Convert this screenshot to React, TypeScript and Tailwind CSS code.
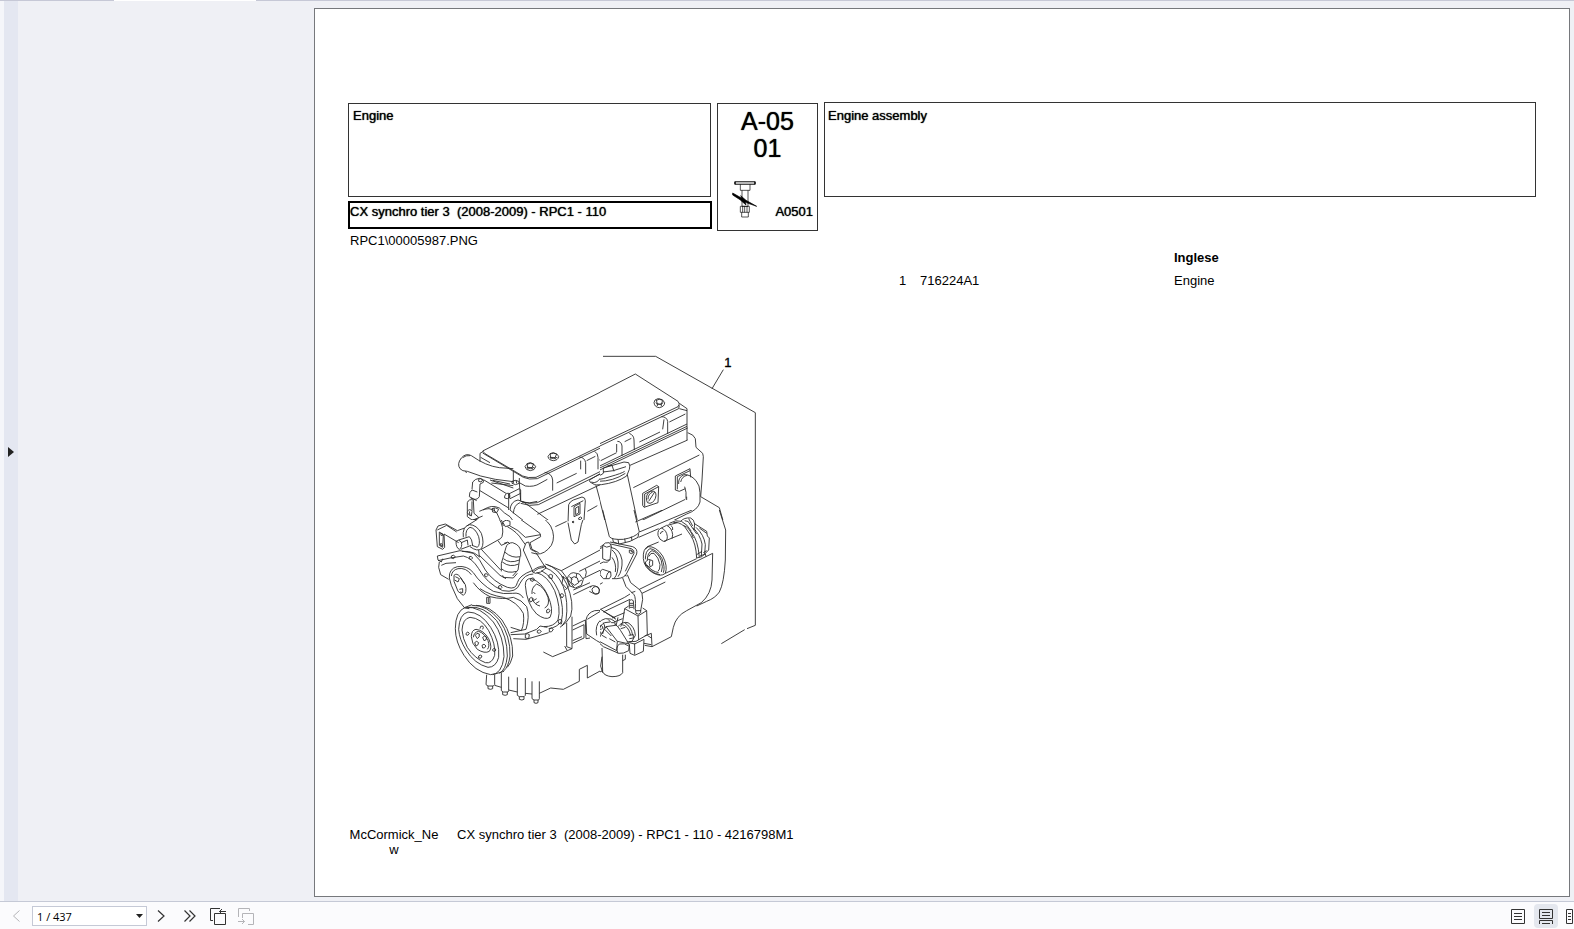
import React from 'react';

const TITLE = 'CX synchro tier 3\u00a0 (2008-2009) - RPC1 - 110';

// Rocker cover, thermostat housing and water pump
const coverLeft = [
  'M158 333 L540 142',
  'M158 333 L165 341 L278 408 Q292 415 318 412 L540 304',
  'M158 339 L280 412 Q296 420 322 416 L540 310',
  'M150 340 L150 365 M150 340 L160 334 M152 352 L180 368',
  'M268 414 L268 428 L286 438 Q312 442 330 430 L352 418',
  'M268 428 L272 484 Q298 494 322 488 L540 380',
  'M272 490 Q300 500 325 494 L540 388 M276 486 Q300 492 322 484',
  'M344 397 Q366 400 368 420 L368 452',
  'M448 351 Q464 352 467 368 L467 402 M452 362 L452 388',
  'M494 334 Q504 340 504 352 L504 388',
  'M380 429 L440 400 M470 362 L496 349 M508 360 L540 343',
  'M90 386 Q80 372 94 354 Q108 338 124 347 Q168 378 208 383 L250 386',
  'M90 386 Q96 394 112 394 Q150 410 196 418 L250 425 M106 394 L110 399',
  'M120 347 Q108 345 98 353 M250 394 L250 430',
  'M246 424 Q256 418 266 424 L268 430 Q256 438 246 430 Z M258 420 L260 430',
  'M126 448 L128 426 Q136 416 148 415 L160 419 L160 427 L150 432 L148 470 Q140 484 122 474',
  'M118 470 Q117 456 126 450 L142 456 M118 470 L140 482',
  'M146 418 Q152 412 158 420 Q154 430 146 424 Z',
  'M162 420 L228 460 M150 452 L236 504 M180 420 L250 444 M184 429 L250 437 M188 421 L240 432',
  'M224 468 Q228 456 238 460 L240 470 Q232 480 224 474 Z',
  'M236 462 L268 446 L272 450 L272 480 M236 462 L236 510 M236 462 L240 476 L272 460',
  'M240 510 Q242 484 264 480 Q280 482 300 500 L362 546 L374 570',
  'M250 520 Q252 494 270 488 M240 510 L252 520 L330 580',
  'M112 488 Q116 476 130 480 L132 520 L146 532 L142 538 L126 540 L112 530 Z M126 484 L126 512',
  'M112 514 Q120 504 126 514 L124 528 Q116 526 112 518 M118 514 L120 526',
  'M110 548 L158 528 M148 514 Q180 496 200 518 Q214 540 216 570',
  'M160 510 Q184 492 208 504 Q222 520 240 530 L262 560',
  'M186 506 Q196 500 206 508 L200 518 L188 516 Z M192 504 L194 514',
  'M222 546 Q232 538 242 548 L238 556 L224 556 Z M230 542 L230 554',
  'M322 523 L540 420',
  'M416 494 Q420 484 430 480 L456 471 Q466 472 466 482 L462 540 L454 570 M416 494 L414 548 L424 570',
  'M424 500 L460 482 M432 500 L450 490 L450 522 L432 530 Z M437 504 L446 499 L446 519 L437 524 Z',
  'M446 534 Q452 528 456 534 Q452 542 446 538 Z',
  'M472 514 L502 497',
  'M480 426 Q476 422 482 418 L520 395 L524 400 L540 390 M480 426 L494 434 Q500 436 540 432 M484 426 Q500 436 520 402',
  'M498 436 L534 570',
];

// Right half of the cover, filter head and coolant outlet
const coverRight = [
  'M0 172 L136 102 L264 184 Q272 192 264 200 L0 325',
  'M268 190 L291 206 L291 300 M0 332 L266 206 L268 196',
  'M268 206 L291 212',
  'M0 392 L291 252 M0 398 L291 259 M0 404 L293 264 M120 376 L293 300',
  'M214 230 Q230 230 233 244 L233 282 M222 238 L218 268',
  'M118 280 Q132 286 132 300 L133 330 M82 304 Q94 304 96 318 L96 348 M80 312 L80 336',
  'M148 306 L210 276 M104 305 L124 295 M32 362 L80 338 M238 246 L286 222',
  'M293 278 Q312 284 316 296 L318 322 L338 340 L340 350 L336 420 L332 470',
  'M130 443 L328 345 M146 546 L286 478 M290 470 L290 480',
  'M0 420 L38 402 L42 394 M0 424 Q10 436 34 434 Q80 428 110 408 L118 388 Q122 378 116 368 L102 366 L40 384 L40 396 L70 392 L108 380',
  'M52 378 L66 376 L72 394 M0 416 Q20 424 60 410 Q96 400 104 394 M10 434 L24 424 Q70 424 106 400',
  'M18 436 L52 570 M112 404 L148 570',
  'M158 460 L200 436 L206 440 L204 488 L162 502 L158 496 Z M164 462 L206 440 M164 462 L164 500',
  'M170 482 Q166 462 182 454 Q198 450 198 466 Q196 486 180 490 Q170 490 170 482 Z M176 484 L194 456 M174 478 Q174 462 188 456',
  'M256 408 L300 386 L302 412 M256 408 L256 450 L268 454 L286 446 M262 410 L300 392 M262 410 L262 448',
  'M266 432 Q264 412 282 404 Q300 402 318 422 Q330 436 330 458 L330 486 Q324 510 290 522 L206 564',
  'M272 426 Q276 408 292 406 M284 440 Q290 456 288 476',
  'M332 470 L388 503 L407 570',
  'M192 188 Q192 178 204 176 Q220 176 224 188 Q224 200 208 203 Q194 202 192 188 Z M197 188 Q208 198 220 188 M199 180 L202 192 L214 193 L218 181 M200 181 Q208 174 217 181 M202 192 L202 198 M214 193 L214 199',
];

// Timing cover, crank pulley and sump
const timing = [
  'M18 60 L24 48 L46 42 L82 62 L104 54 M18 60 L22 110 L38 118 L44 112 L42 72 L86 98 M22 60 L50 46 L80 66 M28 66 L40 74 L38 112 L28 106 Z',
  'M32 70 Q38 68 38 76 Q32 80 32 70 M30 102 Q36 98 38 106 Q32 112 30 102',
  'M78 94 Q86 86 94 96 Q98 112 88 118 Q78 114 78 94 Z M86 90 L118 80 M92 118 L124 106 M94 98 L112 90 L114 106',
  'M100 82 Q96 50 118 44 Q140 44 154 70 Q164 100 154 116 Q142 126 120 110 M108 80 Q106 58 120 52 Q136 54 146 80 Q152 104 142 112 L126 106 M118 80 Q126 86 128 106',
  'M110 48 L158 18 Q188 8 206 24 Q224 52 216 80 Q212 88 204 90 L154 118',
  'M218 36 Q228 26 240 34 L240 46 L226 50 Z M232 50 Q262 66 276 90 L286 104 M240 48 Q264 58 286 82 L332 74 M208 4 Q214 32 220 48',
  'M252 14 L330 70 L332 80 L300 98 M340 24 Q354 36 362 48 Q378 80 364 106 Q344 134 320 132 L304 128',
  'M286 104 Q286 96 296 96 L302 118 L318 126 M300 98 L306 118 L326 128 M286 104 L280 120 L310 188 M318 128 L346 172',
  'M306 184 Q322 168 346 168 L348 174 Q332 190 316 190 Z M312 184 Q326 172 342 172',
  'M148 136 L210 196 L228 206 M146 120 L148 142 M204 92 L214 106 L232 98 M154 118 L212 180',
  'M228 112 Q232 98 248 98 Q272 106 272 126 L272 140 M228 112 L224 126 Q246 146 270 140',
  'M224 126 L214 160 L214 184 M270 140 L264 180 L248 198 M220 146 Q240 162 268 150 M217 156 Q240 174 266 162 M214 176 Q232 192 260 184',
  'M240 102 L234 96 L222 100 M218 196 L220 202 L250 204 L262 190',
  'M22 138 L90 122 L130 130 Q150 146 166 180 Q190 216 232 232 Q258 240 262 218 Q268 196 306 182',
  'M24 152 L60 144 L100 138 Q126 144 146 176 Q170 220 218 242 Q260 250 270 220 Q284 192 310 192',
  'M22 138 L24 150 L34 156 L38 146 M28 156 L26 172 L32 194 L56 208 M34 166 L48 160 L78 158 M96 124 Q116 122 134 130 L148 140',
  'M58 204 Q56 176 82 170 Q112 166 130 188 Q152 222 190 244 Q222 254 248 250 Q270 246 280 264 M64 198 Q66 180 84 176 Q108 172 124 194',
  'M58 204 L64 226 L82 266 L104 294 L118 296 M130 218 Q150 246 180 260 Q220 270 250 262 Q276 270 290 290 Q300 320 288 358 M150 236 Q180 256 220 262 Q262 276 280 310 Q284 340 274 362 L242 352 M242 368 L288 358',
  'M64 138 Q70 132 76 140 Q72 150 64 144 Z M118 140 Q124 136 128 144 Q124 152 118 146 Z M164 192 Q170 188 174 196 Q170 204 164 198 Z M206 228 Q212 222 216 232 Q212 240 206 234 Z',
  'M72 196 Q80 188 90 200 L106 224 Q112 248 100 256 L84 244 L72 214 Z M76 200 L88 206 L84 216 L74 210 M88 238 L98 236 L98 248 L90 246 M92 204 L104 222',
  'M170 262 L180 262 L180 280 L170 280 Z M175 264 L175 278',
  'M286 226 Q286 204 304 206 Q336 216 354 258 Q372 300 360 322 Q346 332 320 312 Q290 282 286 226 Z',
  'M306 252 Q304 232 320 222 Q344 232 354 262 Q360 286 344 294 M306 264 Q312 284 330 288 M310 246 L316 252 M310 272 L320 266 M318 280 L328 274',
  'M302 206 Q310 200 314 208 Q310 218 302 212 Z M298 266 Q304 258 310 266 Q308 276 300 276 Z M350 300 Q356 292 360 302 Q356 312 350 308 Z',
  'M320 188 Q352 196 374 242 Q394 294 384 330 Q372 350 342 350 M334 182 Q366 198 386 244 Q404 296 394 334 Q382 352 356 356 M346 162 Q388 174 410 222 Q434 280 422 318 Q410 340 390 352 M344 172 Q382 186 400 230 Q416 276 408 330 L396 348',
  'M356 196 Q362 190 368 196 L366 206 L358 204 Z M390 254 Q396 246 402 256 L396 264 Z M384 332 Q390 324 396 332 L394 342 L386 340 Z M358 358 Q364 350 370 358 Q366 368 358 366 Z M322 362 Q328 356 334 364 Q328 374 322 368 Z M286 374 Q292 368 298 374 L296 386 L286 384 Z',
  'M242 374 L284 372 L320 358 L330 348 L352 352 M250 386 L288 388 L330 376 L356 368 M352 164 L394 182 L432 232 M394 182 L540 104',
  'M76 356 Q76 304 106 292 Q150 288 190 336 Q222 380 222 440 Q216 494 182 494 Q134 486 102 436 Q76 396 76 356 Z',
  'M86 358 Q88 312 114 306 Q152 306 182 352 Q210 396 206 442 Q198 472 174 472 Q134 462 108 420 Q88 388 86 358 Z',
  'M96 360 Q98 326 120 322 Q154 324 176 362 Q198 404 194 436 Q186 462 166 458 Q134 446 112 412 Q98 386 96 360 Z',
  'M106 292 L126 284 M116 292 Q160 286 200 332 Q232 378 232 438 Q228 480 208 490 M126 286 Q170 284 208 330 Q242 378 240 438 Q236 470 220 484 M138 286 Q180 286 216 330 Q250 380 248 438 Q242 462 232 472 M188 494 L222 484',
  'M124 380 Q124 360 138 358 Q160 360 176 386 Q188 412 178 424 Q164 432 142 418 Q124 400 124 380 Z M130 382 Q132 366 146 364 Q164 370 174 392 Q180 410 172 418',
  'M136 376 Q140 366 148 372 Q150 382 142 386 Z M158 382 Q164 374 170 382 Q170 392 162 392 Z M134 398 Q140 390 146 398 Q144 408 138 408 Z M156 406 Q162 398 168 408 Q164 416 158 414 Z',
  'M108 370 Q114 362 118 370 Q114 380 108 374 Z M150 356 Q150 346 158 348 Q162 352 158 358 M146 438 Q150 432 156 438 Q154 448 146 444 Z M188 418 Q194 410 198 420 Q194 428 188 422 Z',
  'M170 494 L168 524 L174 528 L190 528 L194 524 L194 494 M174 528 L174 536 Q182 540 188 536 L188 528',
  'M214 488 L214 542 L220 546 L234 546 L236 542 L236 500 M218 546 L218 554 Q226 558 232 554 L232 546',
  'M262 502 L262 556 L268 560 L282 560 L286 556 L286 504 M268 560 L268 568 Q276 572 282 568 L282 560',
  'M306 514 L306 566 L312 570 L326 570 L328 566 L328 514 M312 570 L312 578 Q318 582 324 578 L324 570',
  'M194 526 L214 532 M236 540 L262 546 M286 550 L306 552 M328 550 L362 534 L400 538 L448 514 L448 478 L472 466 L472 504 L512 482 L514 446 L520 412',
  'M340 426 L368 440 L412 422 L426 416 L426 320 M410 338 L410 410 L426 416 M412 422 L404 408',
  'M428 348 L466 330 M428 360 L462 344 L462 384 L428 400 M466 330 L468 386 L480 384 M428 392 L456 380',
  'M468 330 Q472 308 494 302 Q520 298 540 314 M468 330 L470 372 L500 392 L514 400 M500 376 Q494 346 512 330 Q526 322 540 328',
  'M394 200 L410 206 L418 228 L406 240 M400 198 L396 220 L410 236',
  'M412 206 Q416 190 430 188 L448 192 L460 208 L454 226 L436 234 L420 228 Z M424 204 Q432 196 442 204 L446 218 L434 226 L424 218 Z M418 200 L428 208 M440 192 L438 204 M456 210 L444 216',
  'M448 184 L540 138 M458 206 L512 180 M430 254 L484 228 M480 232 Q486 224 496 228 Q508 230 510 244 Q504 256 494 252 L478 244 M430 240 L480 218 M466 176 Q472 186 466 200',
  'M472 328 L540 286 M322 10 L346 0 M376 50 L410 34 M414 38 L424 90 L434 102 L444 96 L454 44 L462 20 M414 34 L416 22',
  'M426 36 Q430 30 432 36 Q430 42 426 36 M452 22 Q458 18 458 26 Q454 30 452 22',
];

// Starter motor, fuel filter, injection pump and flywheel housing
const starter = [
  'M38 0 L58 80 Q66 90 100 88 Q136 82 148 66 L132 0',
  'M68 86 L70 96 L88 102 L120 94 L144 82 L146 70 M84 88 L86 100 M104 86 L106 98 M124 80 L126 92',
  'M136 36 L218 0 M148 66 L306 0 M146 82 L206 56',
  'M38 106 Q44 96 58 98 L64 108 L60 150 Q50 154 38 146 Z M38 106 Q50 116 62 108 M60 96 L128 110 Q144 116 140 132 L108 194 Q98 208 66 206',
  'M62 102 L124 116 Q134 120 132 130 L106 184 M118 120 Q128 118 130 128 Q124 134 118 128 Z M122 122 L127 128',
  'M62 112 Q90 116 96 150 Q98 182 84 200 M66 120 Q80 130 84 156 Q86 190 72 206 M66 142 Q80 160 76 186',
  'M0 130 L38 112 M0 176 L40 156 Q56 160 58 148 M0 196 L30 178 M16 128 L24 116 L38 106',
  'M30 194 Q28 180 38 178 L62 186 Q66 200 58 206 L40 206 Z M62 186 Q52 182 48 206 M28 194 L0 206 M0 240 L38 218',
  'M98 204 L108 230 L132 254 Q138 262 136 296 M112 194 L122 218 L150 240 Q158 248 158 268 L152 302 M104 196 L110 198',
  'M32 298 L104 262 L120 252 M148 238 L368 130 M40 306 L120 268 M156 250 L226 216 M124 248 L136 244',
  'M368 130 L366 210 Q364 252 334 278 L290 302 Q258 318 250 352 L244 380 L186 410 L164 406',
  'M388 0 L407 60 L406 150 Q402 220 388 246 Q376 264 350 274 L320 288',
  'M160 146 Q158 116 174 110 Q198 108 218 138 Q234 168 226 190 Q212 202 188 188 Q162 172 160 146 Z',
  'M166 148 Q166 122 180 116 Q200 118 216 146 Q226 172 220 188 M172 150 Q172 128 186 122 Q204 126 214 152 Q220 172 214 186 M164 158 Q180 190 210 194 M176 140 Q182 126 192 130 Q206 142 210 164 Q210 180 204 184 M170 164 Q184 184 206 188',
  'M166 156 L176 148 L188 152 L188 166 L178 172 L168 166 Z M180 150 Q176 160 180 170 M172 110 L206 96 M226 190 L320 146 M166 118 L176 108',
  'M204 76 Q202 58 214 54 Q230 60 232 80 Q232 96 220 94 Q208 90 204 76 Z M211 72 Q212 64 220 64 M214 54 L230 46 Q246 54 248 74 L246 86 M222 94 L276 72 M232 46 L262 38 M248 60 Q250 50 242 46',
  'M238 40 Q258 28 274 34 Q292 42 304 64 M250 38 Q266 34 284 50 L302 76 Q318 100 320 144 M272 34 Q282 22 302 24 Q312 28 314 42 L312 60 M284 32 Q296 30 302 46 L320 72 M296 26 L308 48 M280 46 Q300 52 310 84',
  'M312 40 L350 64 L352 78 L358 84 L356 120 L336 140 L320 144 M310 54 Q330 74 336 102 L334 138 M318 52 Q342 74 346 104 L344 132 M304 66 Q324 90 328 142 M328 54 L350 70',
  'M320 134 L336 124 M340 128 L350 122 M330 138 L346 132 L348 140',
  'M104 296 L144 318 L170 302 L172 374 L138 394 L110 396 M144 318 L146 390 M104 296 L98 336 M104 296 L116 288 M170 302 L158 294 M136 296 L138 310 Q146 316 152 308 L152 300 M138 302 L152 302',
  'M118 296 L118 272 Q124 266 130 272 L132 298 M118 280 L130 280 M118 286 L130 286 M120 292 L130 292 M98 336 L92 350',
  'M0 302 L32 298 L78 328 M66 324 L104 308 M72 336 L98 326 M78 348 L84 322 M40 304 L76 324',
  'M18 390 L16 364 Q22 332 46 326 Q66 324 74 334 L76 346 L48 350 L24 390 M26 364 Q30 344 44 338 L60 336 M30 348 Q38 344 38 354 Q34 362 28 356 Z M24 366 Q32 362 34 370 L28 374 M40 338 L44 348 L38 372 M54 328 L64 338 L72 338',
  'M18 390 L40 410 L86 430 Q100 432 116 422 L118 404 L92 362 Q84 348 74 342 M48 350 L82 394 L118 402 M82 394 L80 422 M84 430 Q76 412 88 402 Q104 398 116 408 M24 392 L80 422 M36 376 L50 384 M58 386 L76 396 M44 358 L64 378',
  'M84 350 Q96 334 114 338 Q134 350 136 376 L126 394 L116 396 M96 344 Q114 346 122 376 M104 338 Q124 350 128 376 M116 376 L130 374 L130 384 L118 386 M92 356 L106 352',
  'M118 404 L120 430 L134 436 L160 424 L162 388 M134 400 L134 434 M118 398 L134 402 L162 388 M164 378 L184 370 L186 410 M172 376 L184 384 M162 400 L184 404',
  'M36 414 L38 486 Q44 498 66 500 Q92 500 98 488 L98 434 M36 440 L32 468 L38 488 M98 452 L106 448 L106 434 M0 500 L38 482 M0 386 L18 396',
];

// Leader line of the callout
const leader = [
  'M519 49 L677 49 L976 218 L976 856 L951 866 M880 89 L846 146',
  'M944 869 L874 911',
];

const bolts = [
  [301, 379],
  [370, 349],
];

function EngineDrawing() {
  return (
    <svg
      viewBox="0 0 1020 1110"
      className="block w-[340px] h-[370px]"
      fill="none"
      stroke="#2b2b2b"
      strokeWidth="2.7"
      strokeLinejoin="round"
      role="img"
      aria-label="Engine assembly">
      <svg x="0" y="0" width="510" height="540" viewBox="0 0 510 540">
        {coverLeft.map((d) =>
        <path key={d} d={d} />
        )}
        {bolts.map(([x, y]) =>
        <g key={x} transform={`translate(${x} ${y})`}>
            <path d="M-16 1 Q-14 -8 0 -9 Q14 -8 16 1 Q14 12 0 13 Q-14 12 -16 1 Z" />
            <path d="M-10 -8 L-8 3 L5 4 L10 -7 M-10 -8 Q0 -15 10 -7 M-11 3 Q0 11 12 3 M-8 3 L-7 9 M5 4 L6 9" />
          </g>
        )}
      </svg>
      <svg x="510" y="0" width="510" height="540" viewBox="30 0 510 540">
        {coverRight.map((d) =>
        <path key={d} d={d} />
        )}
      </svg>
      <svg x="0" y="540" width="510" height="570" viewBox="0 30 510 570">
        {timing.map((d) =>
        <path key={d} d={d} />
        )}
      </svg>
      <svg x="510" y="510" width="510" height="600" viewBox="30 0 510 600">
        {starter.map((d) =>
        <path key={d} d={d} />
        )}
      </svg>
      <path d="M486 748 Q490 738 502 740 Q512 748 506 760 Q496 766 488 756 Z" />
      {leader.map((d) =>
      <path key={d} d={d} />
      )}
      <text
        x="883"
        y="80"
        fontSize="39"
        fontFamily="Liberation Sans, Arial, sans-serif"
        fill="#000000"
        stroke="#000000"
        strokeWidth="1">
        1
      </text>
    </svg>);

}

function InjectorIcon() {
  return (
    <svg viewBox="0 0 78 111" className="w-[26px] h-[37px]" fill="none" stroke="#000000" strokeWidth="2">
      <rect x="9" y="2" width="60" height="8" fill="#b5b5b5" />
      <path d="M9 2v8M69 2v8" strokeWidth="4" />
      <path d="M25 10v18h29V10M30 28v48M48 28v48M30 76h18" />
      <path d="M2 36 30 52 26 44 42 58 74 76 40 64 42 72 24 56 2 42Z" fill="#000000" />
      <path d="M25 76h27v18H25ZM32 76v18M38 76v18M45 76v18M29 94v14h20V94" />
    </svg>);

}

function Toolbar() {
  return (
    <footer className="h-7 shrink-0 flex items-center bg-[#fbfbfd] border-t border-[#c5c9d6] pl-3 pt-px overflow-hidden text-[#333333]">
      <button type="button" disabled aria-label="Previous page" className="w-2 shrink-0 text-[#b4b4b8]">
        <svg viewBox="0 0 8 12" className="w-2 h-3" fill="none" stroke="currentColor">
          <path d="M7.500 .5 1.500 6l6 5.500" />
        </svg>
      </button>
      <div className="relative ml-3 w-[115px] h-5 shrink-0">
        <select
          aria-label="Page"
          className="block w-full h-full appearance-none bg-white border border-[#c5c9d6] pl-1 text-[11px] text-black font-['Open_Sans',sans-serif]">
          <option>1 / 437</option>
        </select>
        <svg viewBox="0 0 7 4" className="absolute right-1 top-2 w-[7px] h-1 pointer-events-none" fill="#222222">
          <path d="M0 0h7L3.500 4Z" />
        </svg>
      </div>
      <button type="button" aria-label="Next page" className="ml-[10px] w-2 shrink-0">
        <svg viewBox="0 0 8 12" className="w-2 h-3" fill="none" stroke="currentColor" strokeWidth="1.2">
          <path d="M1 .5 7 6l-6 5.500" />
        </svg>
      </button>
      <button type="button" aria-label="Last page" className="ml-[19px] w-3 shrink-0">
        <svg viewBox="0 0 12 12" className="w-3 h-3" fill="none" stroke="currentColor" strokeWidth="1.2">
          <path d="M.5 .5 6 6 .5 11.500M5.500 .5 11 6l-5.500 5.500" />
        </svg>
      </button>
      <button type="button" aria-label="Previous view" className="ml-[14px] shrink-0">
        <svg viewBox="0 0 17 17" className="w-[17px] h-[17px]" fill="none" stroke="currentColor">
          <path d="M3 12.500H.5V.5H10M4.500 5.500h11v11h-11ZM9.500 3.500H16M12 1 9.500 3.500 12 6" />
        </svg>
      </button>
      <button type="button" disabled aria-label="Next view" className="ml-[11px] shrink-0 text-[#b4b4b8]">
        <svg viewBox="0 0 17 17" className="w-[17px] h-[17px]" fill="none" stroke="currentColor">
          <path d="M.5 9V.5h11V3M4.500 10V5.500h11v11H10M0 13.500h6.500M4 11l2.500 2.500L4 16" />
        </svg>
      </button>
      <div className="ml-auto flex items-center shrink-0">
        <button type="button" aria-label="Single page" className="w-6 h-6 flex items-center justify-center">
          <svg viewBox="0 0 14 15" className="w-[14px] h-[15px]" fill="none" stroke="currentColor">
            <path d="M.5.5h13v14H.5ZM3 4.500h8M3 7.500h8M3 10.500h8" />
          </svg>
        </button>
        <button type="button" aria-label="Continuous" aria-pressed="true" className="ml-1 w-6 h-6 flex items-center justify-center rounded bg-[#e4e7ee]">
          <svg viewBox="0 0 14 15" className="w-[14px] h-[15px]" fill="none" stroke="currentColor">
            <path d="M.5.5h13v9H.5ZM3 3.500h8M3 6.500h8M.5 15v-3.500h13V15M3 14.500h8" />
          </svg>
        </button>
        <button type="button" aria-label="Facing pages" className="ml-2 w-2 h-6 flex items-center">
          <svg viewBox="0 0 8 15" className="w-2 h-[15px]" fill="none" stroke="currentColor">
            <path d="M.5.5h6v14h-6ZM2 4.500h3M2 7.500h3M2 10.500h3" />
          </svg>
        </button>
      </div>
    </footer>);

}

export default function App() {
  return (
    <div className="h-screen flex flex-col bg-[#eff0f5] overflow-hidden text-black font-['Liberation_Sans',Arial,sans-serif] text-[13px] leading-[15px]">
      <div className="h-px shrink-0 flex bg-[#c6c8d6]">
        <div className="ml-[114px] w-[142px] bg-white" />
      </div>

      <div className="flex-1 min-h-0 flex">
        <div className="w-1 shrink-0 bg-[#f5f6fa]" />
        <button type="button" aria-label="Open navigation pane" className="w-[14px] shrink-0 flex items-center justify-center pt-[2px] bg-[#e4e7f1]">
          <svg viewBox="0 0 6 10" className="w-[6px] h-[10px]" fill="#222222">
            <path d="M0 0 6 5 0 10Z" />
          </svg>
        </button>

        <main className="flex-1 min-w-0 flex pl-[296px] pr-1 pt-[7px] pb-1">
          <article className="flex-1 min-w-0 flex flex-col bg-white border border-[#76787c] pl-[33px] pr-[33px] pt-[93px] pb-[39px]">
            <header className="flex items-start">
              <div className="mt-px w-[364px] shrink-0 [text-shadow:0_0_1px_#000]">
                <h1 className="h-[94px] mr-px border border-[#333333] pl-1 pt-1">Engine</h1>
                <h2 className="mt-1 h-7 border-2 border-black pt-px whitespace-nowrap">{TITLE}</h2>
              </div>
              <div className="mt-px ml-[5px] w-[101px] h-[128px] shrink-0 border border-[#333333] flex flex-col [text-shadow:0_0_1px_#000]">
                <p className="pt-1 text-center text-[25px] leading-[27px]">
                  A-05
                  <br />
                  01
                </p>
                <div className="mt-auto flex items-end justify-between pl-[14px] pr-1 pb-3">
                  <InjectorIcon />
                  <span className="-mb-px">A0501</span>
                </div>
              </div>
              <h2 className="ml-[6px] h-[95px] flex-1 border border-[#333333] pl-[3px] pt-[5px] [text-shadow:0_0_1px_#000]">
                Engine assembly
              </h2>
            </header>

            <div className="flex-1 flex items-start">
              <figure className="w-[545px] shrink-0">
                <figcaption className="pl-[2px] pt-[2px]">RPC1\00005987.PNG</figcaption>
                <div className="pl-[82px] pt-[92px]">
                  <EngineDrawing />
                </div>
              </figure>
              <table className="mt-[19px] text-left">
                <thead>
                  <tr>
                    <th className="w-[27px]" />
                    <th className="w-[254px]" />
                    <th className="font-bold">Inglese</th>
                  </tr>
                </thead>
                <tbody>
                  <tr>
                    <td className="pt-2 pl-[6px]">1</td>
                    <td className="pt-2">716224A1</td>
                    <td className="pt-2">Engine</td>
                  </tr>
                </tbody>
              </table>
            </div>

            <div className="flex">
              <p className="w-[92px] text-center break-all">McCormick_New</p>
              <p className="ml-[17px] whitespace-nowrap">{TITLE} - 4216798M1</p>
            </div>
          </article>
        </main>
      </div>

      <Toolbar />
    </div>);

}
